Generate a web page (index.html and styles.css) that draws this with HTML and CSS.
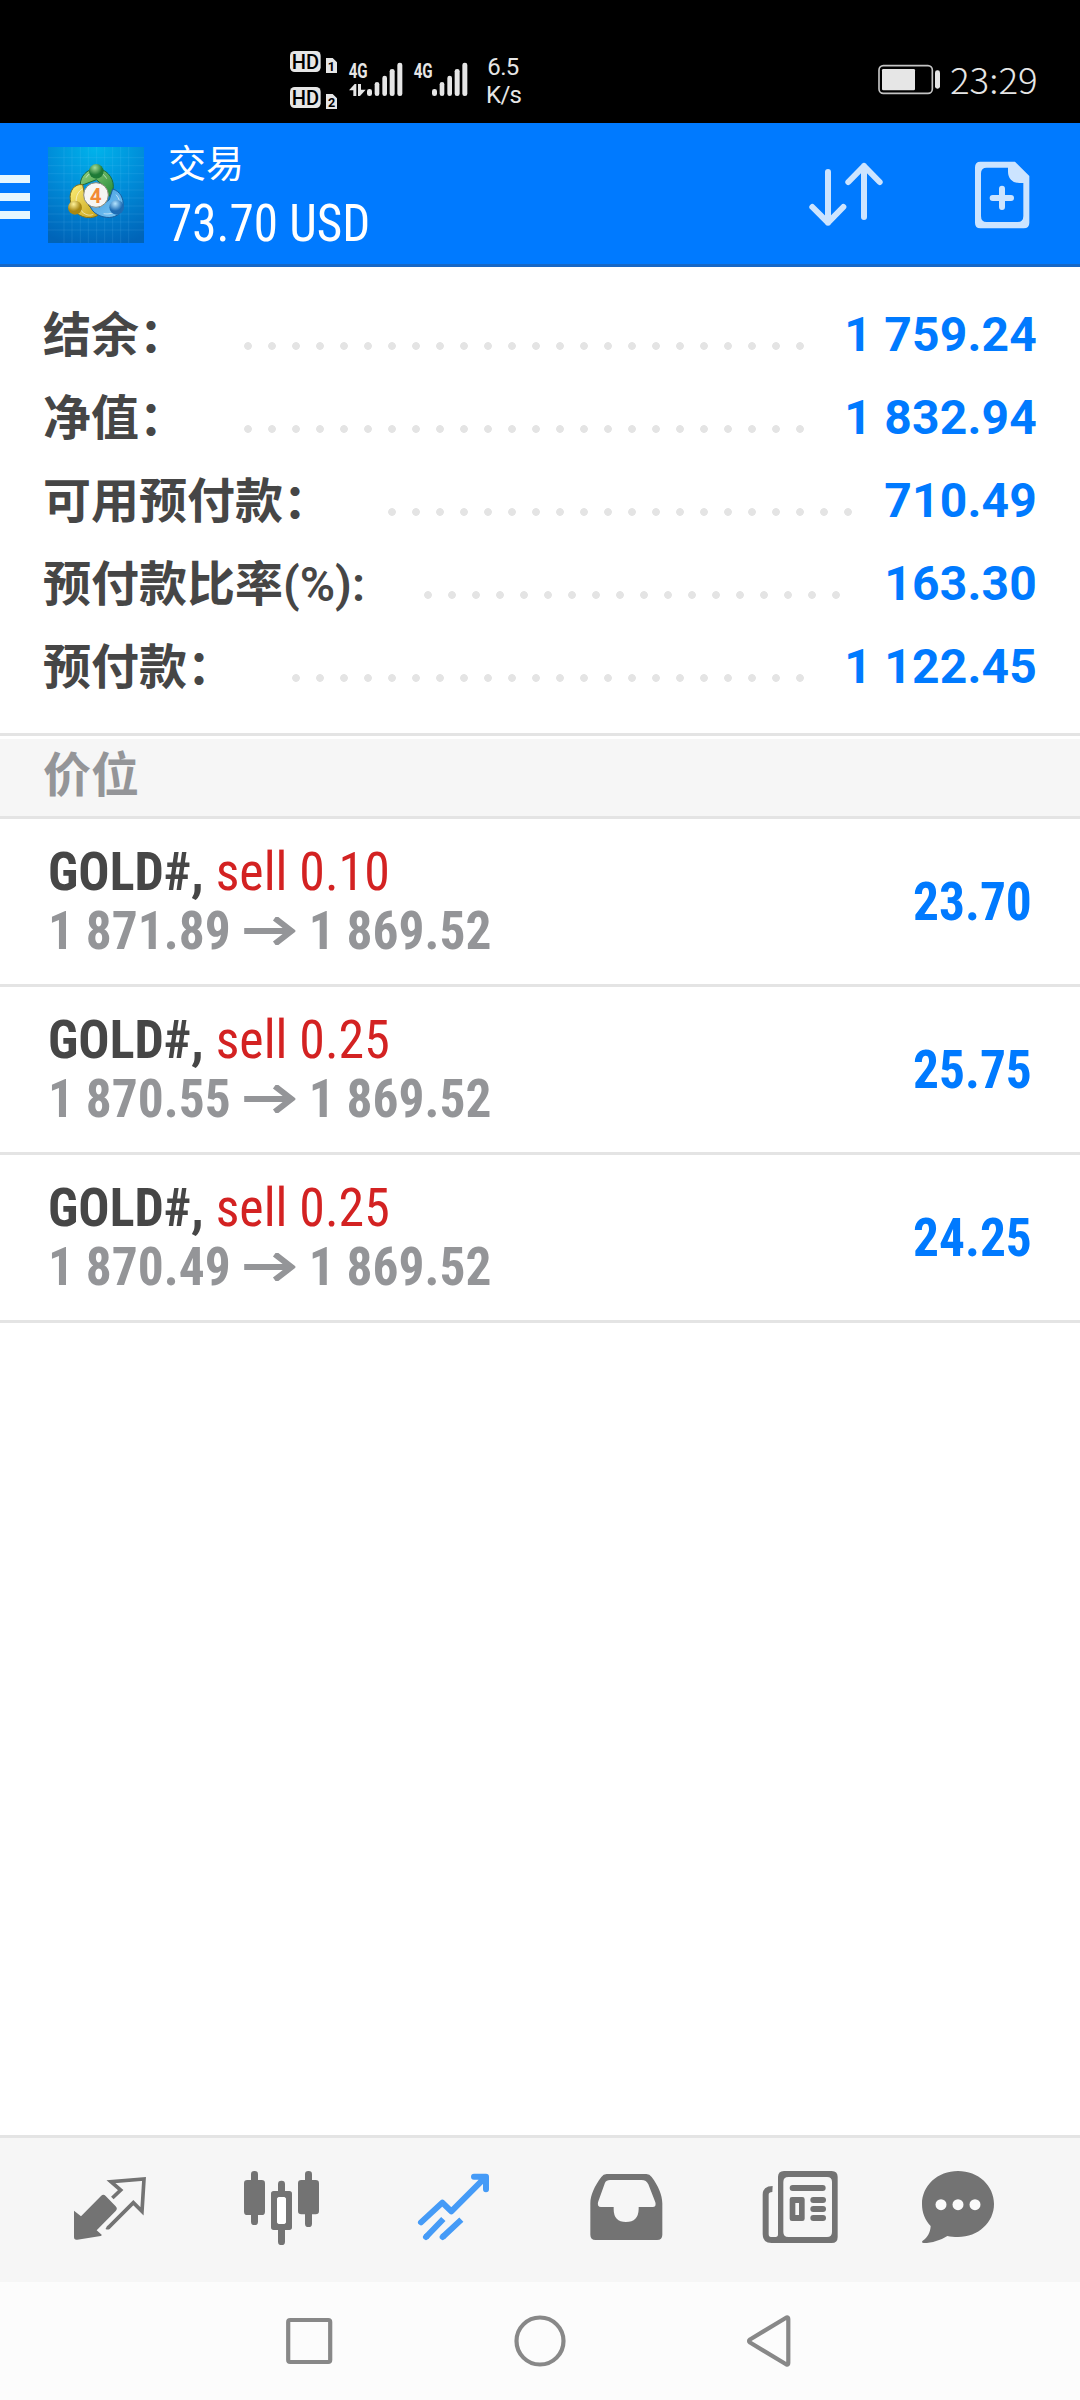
FILE: index.html
```html
<!DOCTYPE html>
<html lang="zh-CN">
<head>
<meta charset="utf-8">
<title>交易</title>
<link rel="stylesheet" href="styles.css">
</head>
<body>
<div class="screen">
  <div class="status">
    <svg class="status-net" viewBox="0 0 840 270" fill="#e6e6e6">
      <rect x="60" y="63" width="92" height="63" rx="14"/>
      <rect x="60" y="171" width="92" height="63" rx="14"/>
      <g class="hd" fill="#000"><text x="65" y="116" textLength="82" lengthAdjust="spacingAndGlyphs">HD</text><text x="65" y="224" textLength="82" lengthAdjust="spacingAndGlyphs">HD</text></g>
      <path d="M168 84h20l13 13v32h-33zM168 192h20l13 13v32h-33z"/>
      <g class="sim" fill="#000"><text x="173" y="122">1</text><text x="174" y="230">2</text></g>
      <g class="gen"><text x="236" y="143" textLength="57" lengthAdjust="spacingAndGlyphs">4G</text><text x="431" y="143" textLength="57" lengthAdjust="spacingAndGlyphs">4G</text></g>
      <path d="M237 181l17-19h5v36h-9v-17zM264 162h9v17h14l-17 19h-6z"/>
      <g id="bars"><rect x="291" y="177" width="15" height="21" rx="7"/><rect x="314" y="156" width="14" height="42" rx="7"/><rect x="337" y="137" width="14" height="61" rx="7"/><rect x="359" y="117" width="15" height="81" rx="7"/><rect x="382" y="98" width="15" height="100" rx="7"/></g>
      <use href="#bars" x="195"/>
      <g class="speed"><text x="652" y="135" textLength="96">6.5</text><text x="648" y="220" textLength="108">K/s</text></g>
    </svg>
    <svg class="status-right" viewBox="0 0 600 240" fill="#e6e6e6">
      <rect x="57" y="77" width="160" height="83" rx="13" fill="none" stroke="#c4c4c4" stroke-width="5"/>
      <rect x="66" y="87" width="99" height="64" rx="4"/>
      <rect x="225" y="91" width="15" height="55" rx="7"/>
      <text class="clock" x="270" y="162" textLength="263" lengthAdjust="spacingAndGlyphs">23:29</text>
    </svg>
  </div>

  <header class="header">
    <div class="burger"><i></i><i></i><i></i></div>
    <svg class="logo" viewBox="144 96 288 288">
      <defs>
        <radialGradient id="bg" cx=".5" cy="0" r="1.05"><stop offset="0" stop-color="#00b4ec"/><stop offset=".5" stop-color="#008bd8"/><stop offset="1" stop-color="#0064b8"/></radialGradient>
        <linearGradient id="gr" x2="1" y2="1"><stop offset="0" stop-color="#9ad282"/><stop offset="1" stop-color="#1f8a35"/></linearGradient>
        <linearGradient id="ye" x2="1" y2="1"><stop offset="0" stop-color="#fff07a"/><stop offset="1" stop-color="#c5a016"/></linearGradient>
        <linearGradient id="bl" x2="1" y2="1"><stop offset="0" stop-color="#3d98dc"/><stop offset="1" stop-color="#7dc8f5"/></linearGradient>
        <radialGradient id="gb" cx=".4" cy=".25"><stop offset="0" stop-color="#a8dc98"/><stop offset="1" stop-color="#1e7a36"/></radialGradient>
        <radialGradient id="yb" cx=".4" cy=".25"><stop offset="0" stop-color="#fff29a"/><stop offset="1" stop-color="#a88712"/></radialGradient>
        <radialGradient id="bb" cx=".4" cy=".25"><stop offset="0" stop-color="#b4e4ff"/><stop offset="1" stop-color="#1d6cb4"/></radialGradient>
      </defs>
      <path fill="url(#bg)" d="M144 96h288v288H144z"/>
      <path stroke="#7fd0f5" stroke-opacity=".2" stroke-width="2" d="M192 96v288M216 96v288M241 96v288M265 96v288M290 96v288M314 96v288M338 96v288M362 96v288M386 96v288M144 128h288M144 152h288M144 176h288M144 201h288M144 225h288M144 249h288M144 273h288M144 297h288M144 321h288M144 345h288"/>
      <g stroke-linejoin="round">
        <path d="M253 208l-12 2c-1-25 20-49 48-49s51 24 51 53c0 14-5 24-12 30l-13-28-26-22z" fill="url(#gr)" stroke="#1c6b3b" stroke-width="3"/>
        <path d="M248 209c-25-4-41 20-37 45 1 30 28 56 60 54 10-1 19-4 23-8l-27-27-13-32z" fill="url(#ye)" stroke="#806e18" stroke-width="3"/>
        <path d="M338 222c22 6 34 29 31 51-3 25-27 37-50 34-28-3-47-20-50-39l29 8 30-22z" fill="url(#bl)" stroke="#1a5e9d" stroke-width="3"/>
      </g>
      <path d="M248 222c-13 6-20 20-20 40l18 28c13 12 25 12 34 8M258 188c6-11 17-17 30-17s26 8 32 20M348 239c10 12 14 22 7 40-10 15-26 20-44 17" fill="none" stroke="#fff" stroke-opacity=".55" stroke-width="3"/>
      <circle cx="289" cy="169" r="22" fill="url(#gb)"/><circle cx="225" cy="278" r="21" fill="url(#yb)"/><circle cx="350" cy="277" r="22" fill="url(#bb)"/>
      <circle cx="288" cy="240" r="37" fill="#f6f6f4" stroke="#8b8b7a" stroke-width="3"/>
      <text class="four" x="287" y="263" text-anchor="middle">4</text>
    </svg>
    <div class="title">
      <div class="title-top">交易</div>
      <div class="title-sum cond">73.70 USD</div>
    </div>
    <svg class="actions" viewBox="0 0 900 420" fill="none" stroke="#cce4ff" stroke-width="18" stroke-linecap="round" stroke-linejoin="round">
      <path d="M144 126v152M97 231l47 47 46-47M252 261V108M205 156l47-48 47 48"/>
      <path fill="#cce4ff" fill-rule="evenodd" stroke="none" d="M601 95h104l43 43v140q0 17-17 17H601q-16 0-16-17V112q0-17 16-17zM620 113q-17 0-17 17v128q0 18 17 18h93q17 0 17-18V159h-12c-20 0-34-14-34-34v-12z"/>
      <path d="M666 176v55M638 204h55"/>
    </svg>
  </header>

  <section class="summary">
    <div class="line"><span class="label">结余：</span><span class="dots" style="--n:24"></span><span class="value">1 759.24</span></div>
    <div class="line"><span class="label">净值：</span><span class="dots" style="--n:24"></span><span class="value">1 832.94</span></div>
    <div class="line"><span class="label">可用预付款：</span><span class="dots" style="--n:20"></span><span class="value">710.49</span></div>
    <div class="line"><span class="label ratio">预付款比率<span class="pct">(%):</span></span><span class="dots" style="--n:18"></span><span class="value">163.30</span></div>
    <div class="line"><span class="label">预付款：</span><span class="dots" style="--n:22"></span><span class="value">1 122.45</span></div>
  </section>

  <h2 class="section">价位</h2>

  <main class="positions">
    <article class="position">
      <div class="info">
        <div class="deal cond"><b>GOLD#,</b> <span class="sell">sell 0.10</span></div>
        <div class="prices cond"><span>1 871.89</span><svg class="arrow" viewBox="0 0 52 28" preserveAspectRatio="none"><path d="M0 14h48M31 1l17 13-17 13"/></svg><span>1 869.52</span></div>
      </div>
      <div class="profit cond">23.70</div>
    </article>
    <article class="position">
      <div class="info">
        <div class="deal cond"><b>GOLD#,</b> <span class="sell">sell 0.25</span></div>
        <div class="prices cond"><span>1 870.55</span><svg class="arrow" viewBox="0 0 52 28" preserveAspectRatio="none"><path d="M0 14h48M31 1l17 13-17 13"/></svg><span>1 869.52</span></div>
      </div>
      <div class="profit cond">25.75</div>
    </article>
    <article class="position">
      <div class="info">
        <div class="deal cond"><b>GOLD#,</b> <span class="sell">sell 0.25</span></div>
        <div class="prices cond"><span>1 870.49</span><svg class="arrow" viewBox="0 0 52 28" preserveAspectRatio="none"><path d="M0 14h48M31 1l17 13-17 13"/></svg><span>1 869.52</span></div>
      </div>
      <div class="profit cond">24.25</div>
    </article>
  </main>

  <nav class="tabs">
    <svg viewBox="-48 54 516 432" fill="#737373"><path d="M102 272l21 17 60-61q7-7 14 0l30 31q7 7 0 14l-57 58 15 13q1 3-3 4l-70 11q-10 2-10-8z"/><path fill="none" stroke="#737373" stroke-width="11" d="M217 234l25-24-29-25 99-8-6 97-26-26-75 75q-2 1-6-1"/></svg>
    <svg viewBox="468 54 516 432" fill="#737373"><rect x="612" y="180" width="63" height="105" rx="10"/><rect x="633" y="153" width="21" height="162" rx="10"/><rect x="774" y="180" width="63" height="103" rx="10"/><rect x="795" y="153" width="21" height="168" rx="10"/><rect x="714" y="182" width="21" height="40" rx="10"/><rect x="714" y="320" width="21" height="55" rx="10"/><path fill-rule="evenodd" d="M701 213h47q8 0 8 8v101q0 8-8 8h-47q-8 0-8-8V221q0-8 8-8zM720 231q-9 0-9 9v63q0 9 9 9h9q9 0 9-9v-63q0-9-9-9z"/><rect x="711" y="231" width="27" height="81" rx="8" fill="#fff"/></svg>
    <svg viewBox="984 54 516 432" fill="none" stroke="#459bf7" stroke-width="18" stroke-linecap="round" stroke-linejoin="round"><path d="M1143 307l64-59 27 26 101-101M1302 170h36v38"/><path stroke-linecap="butt" d="M1158 351l52-54M1208 351l56-52"/><path d="M1158 351l1-1M1208 351l1-1"/><path fill="#459bf7" stroke="none" d="M1312 172h30v34z"/></svg>
    <svg viewBox="-60 54 516 432" fill="#737373"><path fill-rule="evenodd" d="M140 162h119q10 0 16 9c20 27 32 54 32 79v94q0 16-16 16H107q-16 0-16-16v-94c0-25 13-52 33-79q6-9 16-9zM150 180q-11 0-15 8l-21 59q-3 14 9 14h38v7q0 38 37 38t38-38v-7h42q12 0 8-14l-21-54q-6-13-20-13z"/></svg>
    <svg viewBox="456 54 516 432" fill="#737373"><path fill-rule="evenodd" d="M672 153h143q18 0 18 18v180q0 18-18 18H635q-27 0-27-27V224q0-26 30-26l-1 18q-11 0-11 8v118q0 9 7 9h14q7 0 7-8V171q0-18 18-18zM685 171q-15 0-15 15v150q0 15 15 15h116q15 0 15-15V186q0-15-15-15z"/><rect x="689" y="195" width="108" height="18" rx="9"/><path fill-rule="evenodd" d="M696 231h31q7 0 7 7v58q0 7-7 7h-31q-7 0-7-7v-58q0-7 7-7zM706 249v36h11v-36z"/><rect x="751" y="231" width="47" height="18" rx="9"/><rect x="751" y="258" width="47" height="18" rx="9"/><rect x="751" y="285" width="47" height="18" rx="9"/></svg>
    <svg viewBox="972 54 516 432" fill="#737373"><path d="M1194 153c61 0 108 44 108 99s-47 99-108 99c-12 0-22-1-32-3-21 13-45 21-71 21q-8-2-3-7c15-9 23-26 24-44-17-18-26-40-26-66 0-55 47-99 108-99z"/><g fill="#fafafa"><circle cx="1143" cy="254" r="16.500"/><circle cx="1194" cy="254" r="16.500"/><circle cx="1245" cy="254" r="16.500"/></g></svg>
  </nav>

  <div class="sysnav">
    <svg viewBox="260 2282 560 118" fill="none" stroke="#888" stroke-width="4.200" stroke-linejoin="round"><rect x="288.200" y="2320" width="42" height="42" rx="2"/><circle cx="540" cy="2341" r="23.500"/><path d="M786.500 2317.500q1.800-.5 1.800 1.500v44q0 2-1.800 1.500L750 2342.500q-2-1.500 0-3z"/></svg>
  </div>
</div>
</body>
</html>
```
FILE: styles.css
```css
* { box-sizing: border-box; }
body { margin: 0; }

.screen {
  width: 1080px;
  height: 2400px;
  display: flex;
  flex-direction: column;
  background: #fff;
  font-family: Roboto, "Noto Sans CJK SC", sans-serif;
  overflow: hidden;
}
.cond {
  font-family: "Roboto Condensed", Roboto, sans-serif;
  font-stretch: 75%;
  white-space: nowrap;
  transform: scaleX(.952);
  transform-origin: 0 50%;
}
svg { display: block; }

/* Phone status bar */
.status {
  height: 123px;
  padding: 30px 20px 0 270px;
  display: flex;
  justify-content: space-between;
  background: #000;
}
.status-net { width: 280px; height: 90px; }
.status-right { width: 200px; height: 80px; margin-top: 10px; }
.hd { font: 500 62px Roboto, sans-serif; }
.sim { font: 700 38px Roboto, sans-serif; }
.gen { font: 700 62px Roboto, sans-serif; }
.speed { font: 400 72px Roboto, sans-serif; }
.clock { font: 300 106px "Noto Sans CJK SC", "Noto Sans", sans-serif; }

/* App header */
.header {
  height: 144px;
  display: flex;
  align-items: flex-start;
  background: #007aff;
  border-bottom: 3px solid #1767c5;
}
.burger { width: 30px; margin-top: 52px; display: grid; gap: 10px; }
.burger i { height: 8px; background: #e5f7ff; }
.logo { width: 96px; height: 96px; margin: 24px 0 0 18px; }
.four { font: 700 62px Roboto, sans-serif; fill: #f28a35; }
.title { margin: 20px 0 0 24px; flex: 1; color: #fff; }
.title-top { font-size: 38px; line-height: 42px; }
.title-sum { font-size: 52px; line-height: 60px; margin-top: 9px; transform: scaleX(.944); }
.actions { width: 300px; height: 140px; margin-top: 7px; }

/* Account summary */
.summary {
  height: 469px;
  padding: 25px 43px 0 43px;
  border-bottom: 3px solid #e4e4e4;
}
.line { height: 83px; display: flex; align-items: center; }
.label {
  margin-top: -5px;
  font: 700 48px/83px "Noto Sans CJK SC", sans-serif;
  color: #464646;
  white-space: nowrap;
}
.ratio { width: 324px; margin-top: 0; }
.pct { font-family: Roboto, sans-serif; font-weight: 600; }
.dots {
  width: calc(var(--n) * 24px);
  height: 8px;
  margin: 24px 0 0 49px;
  background: radial-gradient(circle at 12px 4px, #e4e4e4 3.5px, transparent 4.2px) 0 0 / 24px 8px repeat-x;
}
.value {
  margin: 2px 0 0 auto;
  font-size: 48px;
  font-weight: 700;
  letter-spacing: .2px;
  color: #007aff;
  white-space: nowrap;
}

.section {
  height: 83px;
  margin: 0;
  padding: 0 43px;
  border-top: 3px solid #fff;
  border-bottom: 3px solid #e4e4e4;
  background: #f6f6f6;
  color: #949598;
  font: 700 48px/64px "Noto Sans CJK SC", sans-serif;
}

/* Open positions */
.positions { flex: 1; }
.position {
  height: 168px;
  padding: 23px 48px 0;
  display: flex;
  justify-content: space-between;
  border-bottom: 3px solid #e4e4e4;
  font-size: 54px;
}
.info { line-height: 59px; }
.deal { color: #464646; transform: scaleX(.96); }
.sell { color: #d32222; }
.prices { display: flex; align-items: center; gap: 14px; font-weight: 700; color: #949598; }
.arrow { width: 54px; height: 28px; fill: none; stroke: #949598; stroke-width: 6; }
.profit { line-height: 120px; font-weight: 700; color: #007aff; transform-origin: 100% 50%; }

/* Bottom tabs and system keys */
.tabs {
  height: 147px;
  padding: 0 24px;
  display: grid;
  grid-template-columns: repeat(6, 172px);
  border-top: 3px solid #e4e4e4;
  background: #f6f6f6;
}
.tabs svg { width: 172px; height: 144px; }
.sysnav { height: 118px; display: flex; justify-content: center; background: #fcfcfc; }
.sysnav svg { width: 560px; height: 118px; }
```
